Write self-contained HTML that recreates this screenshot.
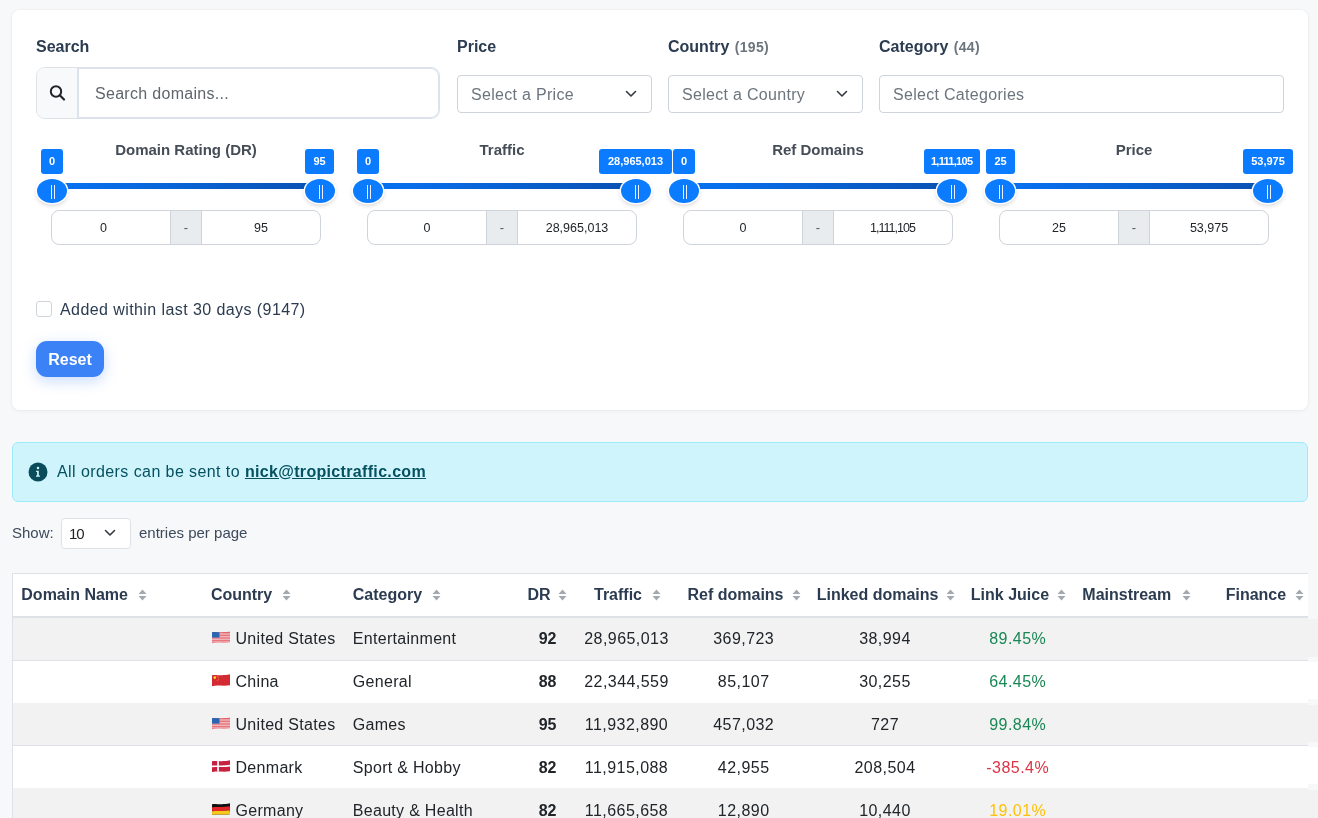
<!DOCTYPE html>
<html><head><meta charset="utf-8">
<style>
*{box-sizing:border-box;margin:0;padding:0}
html,body{width:1318px;height:818px;overflow:hidden;background:#f7f8fa;font-family:"Liberation Sans",sans-serif;color:#212529}
.abs{position:absolute}
.card{position:absolute;left:12px;top:10px;width:1296px;height:400px;background:#fff;border-radius:8px;box-shadow:0 0 0 1px rgba(0,0,0,.02),0 1px 4px rgba(0,0,0,.05)}
.lbl{position:absolute;font-weight:bold;font-size:16px;line-height:22px;color:#2b3b50;white-space:nowrap}
.lbl small{font-size:14px;color:#6c757d;font-weight:bold;margin-left:1px;letter-spacing:.3px}
.sel{position:absolute;top:75px;height:37.5px;border:1px solid #ced4da;border-radius:4px;background:#fff}
.sel span{position:absolute;left:13px;top:9px;font-size:16px;line-height:20px;color:#6c757d;letter-spacing:.3px;white-space:nowrap}
.chev{position:absolute;width:12px;height:8px}
.stitle{position:absolute;top:140px;font-weight:bold;font-size:15px;line-height:20px;color:#454d57;text-align:center;white-space:nowrap}
.track{position:absolute;top:182.5px;height:6.6px;background:linear-gradient(90deg,#0873f4,#0a51b2)}
.tip{position:absolute;top:149px;height:25px;background:#0b7bff;border-radius:3px;color:#fff;font-weight:bold;font-size:11px;line-height:25px;text-align:center;white-space:nowrap}
.hdl{position:absolute;top:179px;width:30px;height:24px;border-radius:50%;background:#0b7bff;box-shadow:0 0 0 1.5px #fff,0 2px 5px rgba(0,0,0,.22)}
.hdl:before,.hdl:after{content:"";position:absolute;top:6px;width:1px;height:14px;background:#eef2f6}
.hdl:before{left:14px}.hdl:after{left:17px}
.ig{position:absolute;top:210px;width:270px;height:35px;border:1px solid #ced4da;border-radius:8px;background:#fff;overflow:hidden}
.ig .a{position:absolute;left:0;top:0;width:118px;height:33px;line-height:35px;text-align:center;font-size:12.5px;color:#212529}
.ig .d{position:absolute;left:118px;top:-1px;width:32px;height:36px;background:#e9ecef;border-left:1px solid #ced4da;border-right:1px solid #ced4da;line-height:35px;text-align:center;font-size:13px;color:#555}
.ig .b{position:absolute;left:150px;top:0;width:118px;height:33px;line-height:35px;text-align:center;font-size:12.5px;color:#212529}
.alert{position:absolute;left:12px;top:442px;width:1296px;height:60px;background:#cff4fc;border:1px solid #9eeaf9;border-radius:6px}
.tbl{position:absolute;left:12px;top:573px;width:1296px;height:300px;background:#fff;border:1px solid #dee2e6;border-right:0}
.th{position:absolute;top:585px;font-weight:bold;font-size:16px;line-height:20px;color:#2b3b50;white-space:nowrap}
.si{position:absolute;top:589px;width:9px;height:12px}
.row{position:absolute;left:13px;width:1295px;height:42.5px}
.rx{position:absolute;left:1308px;width:10px}
.td{position:absolute;font-size:16px;line-height:20px;color:#212529;white-space:nowrap;letter-spacing:.3px}
</style></head><body><div style="position:absolute;left:0;top:0;width:1318px;height:818px;will-change:transform">
<div class="card"></div>

<!-- labels -->
<div class="lbl" style="left:36px;top:36px">Search</div>
<div class="lbl" style="left:457px;top:36px">Price</div>
<div class="lbl" style="left:668px;top:36px">Country <small>(195)</small></div>
<div class="lbl" style="left:879px;top:36px">Category <small>(44)</small></div>

<!-- search -->
<div class="abs" style="left:36px;top:67px;width:404px;height:52px;border:1px solid #dee2e6;border-radius:9px;background:#fff;overflow:hidden">
  <div class="abs" style="left:0;top:0;width:40px;height:50px;background:#f8f9fa"></div>
  <div class="abs" style="left:40px;top:-1px;width:363px;height:52px;border:2px solid #dbe3ee;border-radius:0 9px 9px 0"></div>
  <svg class="abs" style="left:12px;top:17px" width="18" height="16" viewBox="0 0 18 16"><circle cx="7" cy="6.5" r="5.2" fill="none" stroke="#212529" stroke-width="2"/><path d="M10.8 10.3 L15 14.5" stroke="#212529" stroke-width="2.2" stroke-linecap="round"/></svg>
  <div class="abs" style="left:58px;top:16px;font-size:16px;line-height:20px;color:#5f656b;letter-spacing:.3px;white-space:nowrap">Search domains...</div>
</div>

<!-- selects -->
<div class="sel" style="left:457px;width:195px"><span>Select a Price</span>
<svg class="chev" style="left:167px;top:14px" viewBox="0 0 12 8"><path d="M1.5 1.5 L6 6 L10.5 1.5" fill="none" stroke="#343a40" stroke-width="1.6" stroke-linecap="round" stroke-linejoin="round"/></svg></div>
<div class="sel" style="left:668px;width:195px"><span>Select a Country</span>
<svg class="chev" style="left:167px;top:14px" viewBox="0 0 12 8"><path d="M1.5 1.5 L6 6 L10.5 1.5" fill="none" stroke="#343a40" stroke-width="1.6" stroke-linecap="round" stroke-linejoin="round"/></svg></div>
<div class="sel" style="left:879px;width:405px"><span>Select Categories</span></div>

<!-- sliders -->
<div class="stitle" style="left:52px;width:268px">Domain Rating (DR)</div>
<div class="track" style="left:52px;width:268px"></div>
<div class="tip" style="left:41px;width:22px">0</div>
<div class="tip" style="left:305px;width:29px">95</div>
<div class="hdl" style="left:37px"></div>
<div class="hdl" style="left:305px"></div>
<div class="ig" style="left:51px"><div class="a" style="width:103px">0</div><div class="d">-</div><div class="b">95</div></div>

<div class="stitle" style="left:368px;width:268px">Traffic</div>
<div class="track" style="left:368px;width:268px"></div>
<div class="tip" style="left:357px;width:22px">0</div>
<div class="tip" style="left:599px;width:73px">28,965,013</div>
<div class="hdl" style="left:353px"></div>
<div class="hdl" style="left:621px"></div>
<div class="ig" style="left:367px"><div class="a">0</div><div class="d">-</div><div class="b">28,965,013</div></div>

<div class="stitle" style="left:684px;width:268px">Ref Domains</div>
<div class="track" style="left:684px;width:268px"></div>
<div class="tip" style="left:673px;width:22px">0</div>
<div class="tip" style="left:924px;width:56px;letter-spacing:-.7px;text-indent:-.7px">1,111,105</div>
<div class="hdl" style="left:669px"></div>
<div class="hdl" style="left:937px"></div>
<div class="ig" style="left:683px"><div class="a">0</div><div class="d">-</div><div class="b" style="letter-spacing:-1px;text-indent:-1px">1,111,105</div></div>

<div class="stitle" style="left:1000px;width:268px">Price</div>
<div class="track" style="left:1000px;width:268px"></div>
<div class="tip" style="left:986px;width:29px">25</div>
<div class="tip" style="left:1243px;width:50px">53,975</div>
<div class="hdl" style="left:985px"></div>
<div class="hdl" style="left:1253px"></div>
<div class="ig" style="left:999px"><div class="a">25</div><div class="d">-</div><div class="b">53,975</div></div>

<!-- checkbox -->
<div class="abs" style="left:36px;top:301px;width:16px;height:16px;border:1px solid #ced4da;border-radius:3px;background:#fff"></div>
<div class="abs" style="left:60px;top:300px;font-size:16px;line-height:20px;color:#2b3b50;letter-spacing:.42px;white-space:nowrap">Added within last 30 days (9147)</div>

<!-- reset -->
<div class="abs" style="left:36px;top:341px;width:68px;height:36px;background:#3b82f6;border-radius:11px;box-shadow:0 4px 14px rgba(59,130,246,.28);color:#fff;font-weight:bold;font-size:16px;line-height:37px;text-align:center">Reset</div>

<!-- alert -->
<div class="alert"></div>
<svg class="abs" style="left:28.3px;top:461.5px" width="20" height="20" viewBox="0 0 20 20"><circle cx="10" cy="10" r="9.5" fill="#0b4c5b"/><circle cx="10" cy="6.1" r="1.25" fill="#cff4fc"/><path d="M8.1 8.7h2.7v4.7h1.1v1.4H8v-1.4h1.1v-3.3h-1z" fill="#cff4fc"/></svg>
<div class="abs" style="left:57px;top:461.5px;font-size:16px;line-height:20px;color:#055160;letter-spacing:.42px;white-space:nowrap">All orders can be sent to <b style="text-decoration:underline;letter-spacing:.33px">nick@tropictraffic.com</b></div>

<!-- show entries -->
<div class="abs" style="left:12px;top:523px;font-size:15px;line-height:20px;color:#3d4a5c;letter-spacing:0">Show:</div>
<div class="abs" style="left:61px;top:518px;width:70px;height:31px;border:1px solid #dee2e6;border-radius:4px;background:#fff">
  <div class="abs" style="left:7px;top:5px;font-size:15px;line-height:20px;color:#212529;letter-spacing:-1px">10</div>
  <svg class="abs" style="left:42px;top:10px" width="12" height="8" viewBox="0 0 12 8"><path d="M1.5 1.5 L6 6 L10.5 1.5" fill="none" stroke="#343a40" stroke-width="1.6" stroke-linecap="round" stroke-linejoin="round"/></svg>
</div>
<div class="abs" style="left:139px;top:523px;font-size:15px;line-height:20px;color:#3d4a5c;letter-spacing:0;white-space:nowrap">entries per page</div>

<!-- table -->
<div class="tbl"></div>
<div class="th" style="left:21.3px">Domain Name</div>
<svg class="si" style="left:138px" viewBox="0 0 9 12"><path d="M4.5 0.5L8.5 5H0.5z M4.5 11.5L8.5 7H0.5z" fill="#a3a9b1"/></svg>
<div class="th" style="left:210.9px">Country</div>
<svg class="si" style="left:282px" viewBox="0 0 9 12"><path d="M4.5 0.5L8.5 5H0.5z M4.5 11.5L8.5 7H0.5z" fill="#a3a9b1"/></svg>
<div class="th" style="left:352.8px">Category</div>
<svg class="si" style="left:432.3px" viewBox="0 0 9 12"><path d="M4.5 0.5L8.5 5H0.5z M4.5 11.5L8.5 7H0.5z" fill="#a3a9b1"/></svg>
<div class="th" style="left:527.4px">DR</div>
<svg class="si" style="left:557.7px" viewBox="0 0 9 12"><path d="M4.5 0.5L8.5 5H0.5z M4.5 11.5L8.5 7H0.5z" fill="#a3a9b1"/></svg>
<div class="th" style="left:594px">Traffic</div>
<svg class="si" style="left:652.2px" viewBox="0 0 9 12"><path d="M4.5 0.5L8.5 5H0.5z M4.5 11.5L8.5 7H0.5z" fill="#a3a9b1"/></svg>
<div class="th" style="left:687.5px">Ref domains</div>
<svg class="si" style="left:792px" viewBox="0 0 9 12"><path d="M4.5 0.5L8.5 5H0.5z M4.5 11.5L8.5 7H0.5z" fill="#a3a9b1"/></svg>
<div class="th" style="left:816.7px">Linked domains</div>
<svg class="si" style="left:946.4px" viewBox="0 0 9 12"><path d="M4.5 0.5L8.5 5H0.5z M4.5 11.5L8.5 7H0.5z" fill="#a3a9b1"/></svg>
<div class="th" style="left:970.8px">Link Juice</div>
<svg class="si" style="left:1057px" viewBox="0 0 9 12"><path d="M4.5 0.5L8.5 5H0.5z M4.5 11.5L8.5 7H0.5z" fill="#a3a9b1"/></svg>
<div class="th" style="left:1082.3px">Mainstream</div>
<svg class="si" style="left:1182px" viewBox="0 0 9 12"><path d="M4.5 0.5L8.5 5H0.5z M4.5 11.5L8.5 7H0.5z" fill="#a3a9b1"/></svg>
<div class="th" style="left:1225.7px">Finance</div>
<svg class="si" style="left:1295.3px" viewBox="0 0 9 12"><path d="M4.5 0.5L8.5 5H0.5z M4.5 11.5L8.5 7H0.5z" fill="#a3a9b1"/></svg>
<div class="abs" style="left:13px;top:616px;width:1295px;height:2px;background:#dee2e6"></div>
<div class="row" style="top:618.0px;background:#f2f2f2"></div>
<div class="rx" style="top:619.0px;height:37.5px;background:#f2f2f2"></div>
<div class="abs" style="left:13px;top:659.9px;width:1295px;height:1px;background:#dee2e6"></div>
<svg class="abs" style="left:212px;top:631.3px" width="18" height="12.5" viewBox="0 0 18 12.5"><clipPath id="cUS0"><path d="M0 1.2C5 0.2 9 2.2 18 0.3V11.3C10 12.6 6 10.6 0 12.2Z"/></clipPath><g clip-path="url(#cUS0)"><rect width="18" height="13" fill="#f0b4b8"/><path d="M0 1.6h18M0 4.3h18M0 7h18M0 9.7h18M0 12h18" stroke="#e3636c" stroke-width="1.1"/><rect width="7.5" height="6.6" fill="#2b66b3"/></g></svg>
<div class="td" style="left:235.5px;top:629px">United States</div>
<div class="td" style="left:352.8px;top:629px">Entertainment</div>
<div class="td" style="left:456px;width:100.5px;text-align:right;font-weight:bold;letter-spacing:0;top:629px">92</div>
<div class="td" style="left:576.5px;width:100px;text-align:center;letter-spacing:.45px;top:629px">28,965,013</div>
<div class="td" style="left:693.7px;width:100px;text-align:center;letter-spacing:.45px;top:629px">369,723</div>
<div class="td" style="left:835px;width:100px;text-align:center;letter-spacing:.45px;top:629px">38,994</div>
<div class="td" style="left:967.7px;width:100px;text-align:center;letter-spacing:.45px;color:#198754;top:629px">89.45%</div>
<div class="row" style="top:660.6px;background:#fff"></div>
<div class="rx" style="top:662.1px;height:37px;background:#fff"></div>
<div class="abs" style="left:13px;top:702.5px;width:1295px;height:1px;background:#dee2e6"></div>
<svg class="abs" style="left:212px;top:674.3px" width="18" height="12.5" viewBox="0 0 18 12.5"><clipPath id="cCN1"><path d="M0 1.2C5 0.2 9 2.2 18 0.3V11.3C10 12.6 6 10.6 0 12.2Z"/></clipPath><g clip-path="url(#cCN1)"><rect width="18" height="13" fill="#d42a34"/><circle cx="2.8" cy="3.6" r="1.3" fill="#f5e51a"/><circle cx="5.5" cy="2.3" r=".5" fill="#f08a2a"/><circle cx="6.6" cy="3.6" r=".5" fill="#f08a2a"/><circle cx="6.4" cy="5.2" r=".5" fill="#f08a2a"/><circle cx="5.3" cy="6.4" r=".5" fill="#f08a2a"/></g></svg>
<div class="td" style="left:235.5px;top:672px">China</div>
<div class="td" style="left:352.8px;top:672px">General</div>
<div class="td" style="left:456px;width:100.5px;text-align:right;font-weight:bold;letter-spacing:0;top:672px">88</div>
<div class="td" style="left:576.5px;width:100px;text-align:center;letter-spacing:.45px;top:672px">22,344,559</div>
<div class="td" style="left:693.7px;width:100px;text-align:center;letter-spacing:.45px;top:672px">85,107</div>
<div class="td" style="left:835px;width:100px;text-align:center;letter-spacing:.45px;top:672px">30,255</div>
<div class="td" style="left:967.7px;width:100px;text-align:center;letter-spacing:.45px;color:#198754;top:672px">64.45%</div>
<div class="row" style="top:703.2px;background:#f2f2f2"></div>
<div class="rx" style="top:704.7px;height:37px;background:#f2f2f2"></div>
<div class="abs" style="left:13px;top:745.1px;width:1295px;height:1px;background:#dee2e6"></div>
<svg class="abs" style="left:212px;top:717.3px" width="18" height="12.5" viewBox="0 0 18 12.5"><clipPath id="cUS2"><path d="M0 1.2C5 0.2 9 2.2 18 0.3V11.3C10 12.6 6 10.6 0 12.2Z"/></clipPath><g clip-path="url(#cUS2)"><rect width="18" height="13" fill="#f0b4b8"/><path d="M0 1.6h18M0 4.3h18M0 7h18M0 9.7h18M0 12h18" stroke="#e3636c" stroke-width="1.1"/><rect width="7.5" height="6.6" fill="#2b66b3"/></g></svg>
<div class="td" style="left:235.5px;top:715px">United States</div>
<div class="td" style="left:352.8px;top:715px">Games</div>
<div class="td" style="left:456px;width:100.5px;text-align:right;font-weight:bold;letter-spacing:0;top:715px">95</div>
<div class="td" style="left:576.5px;width:100px;text-align:center;letter-spacing:.45px;top:715px">11,932,890</div>
<div class="td" style="left:693.7px;width:100px;text-align:center;letter-spacing:.45px;top:715px">457,032</div>
<div class="td" style="left:835px;width:100px;text-align:center;letter-spacing:.45px;top:715px">727</div>
<div class="td" style="left:967.7px;width:100px;text-align:center;letter-spacing:.45px;color:#198754;top:715px">99.84%</div>
<div class="row" style="top:745.8px;background:#fff"></div>
<div class="rx" style="top:747.3px;height:37px;background:#fff"></div>
<div class="abs" style="left:13px;top:787.7px;width:1295px;height:1px;background:#dee2e6"></div>
<svg class="abs" style="left:212px;top:759.8px" width="18" height="12.5" viewBox="0 0 18 12.5"><clipPath id="cDK3"><path d="M0 1.2C5 0.2 9 2.2 18 0.3V11.3C10 12.6 6 10.6 0 12.2Z"/></clipPath><g clip-path="url(#cDK3)"><rect width="18" height="13" fill="#c8203f"/><path d="M0 6.4C5 5.6 9 7.2 18 5.6" stroke="#fff" stroke-width="1.6" fill="none"/><rect x="5.2" y="0" width="1.7" height="13" fill="#fff"/></g></svg>
<div class="td" style="left:235.5px;top:757.5px">Denmark</div>
<div class="td" style="left:352.8px;top:757.5px">Sport &amp; Hobby</div>
<div class="td" style="left:456px;width:100.5px;text-align:right;font-weight:bold;letter-spacing:0;top:757.5px">82</div>
<div class="td" style="left:576.5px;width:100px;text-align:center;letter-spacing:.45px;top:757.5px">11,915,088</div>
<div class="td" style="left:693.7px;width:100px;text-align:center;letter-spacing:.45px;top:757.5px">42,955</div>
<div class="td" style="left:835px;width:100px;text-align:center;letter-spacing:.45px;top:757.5px">208,504</div>
<div class="td" style="left:967.7px;width:100px;text-align:center;letter-spacing:.45px;color:#dc3545;top:757.5px">-385.4%</div>
<div class="row" style="top:788.4px;background:#f2f2f2"></div>
<div class="rx" style="top:789.9px;height:37px;background:#f2f2f2"></div>
<div class="abs" style="left:13px;top:830.3px;width:1295px;height:1px;background:#dee2e6"></div>
<svg class="abs" style="left:212px;top:802.8px" width="18" height="12.5" viewBox="0 0 18 12.5"><clipPath id="cDE4"><path d="M0 1.2C5 0.2 9 2.2 18 0.3V11.3C10 12.6 6 10.6 0 12.2Z"/></clipPath><g clip-path="url(#cDE4)"><rect width="18" height="13" fill="#111"/><path d="M0 6.2C5 5.2 9 7.2 18 5.3" stroke="#e3262a" stroke-width="4" fill="none"/><path d="M0 10.4C5 9.4 9 11.4 18 9.5" stroke="#f7c81c" stroke-width="4.4" fill="none"/></g></svg>
<div class="td" style="left:235.5px;top:800.5px">Germany</div>
<div class="td" style="left:352.8px;top:800.5px">Beauty &amp; Health</div>
<div class="td" style="left:456px;width:100.5px;text-align:right;font-weight:bold;letter-spacing:0;top:800.5px">82</div>
<div class="td" style="left:576.5px;width:100px;text-align:center;letter-spacing:.45px;top:800.5px">11,665,658</div>
<div class="td" style="left:693.7px;width:100px;text-align:center;letter-spacing:.45px;top:800.5px">12,890</div>
<div class="td" style="left:835px;width:100px;text-align:center;letter-spacing:.45px;top:800.5px">10,440</div>
<div class="td" style="left:967.7px;width:100px;text-align:center;letter-spacing:.45px;color:#ffc107;top:800.5px">19.01%</div>
</div></body></html>
